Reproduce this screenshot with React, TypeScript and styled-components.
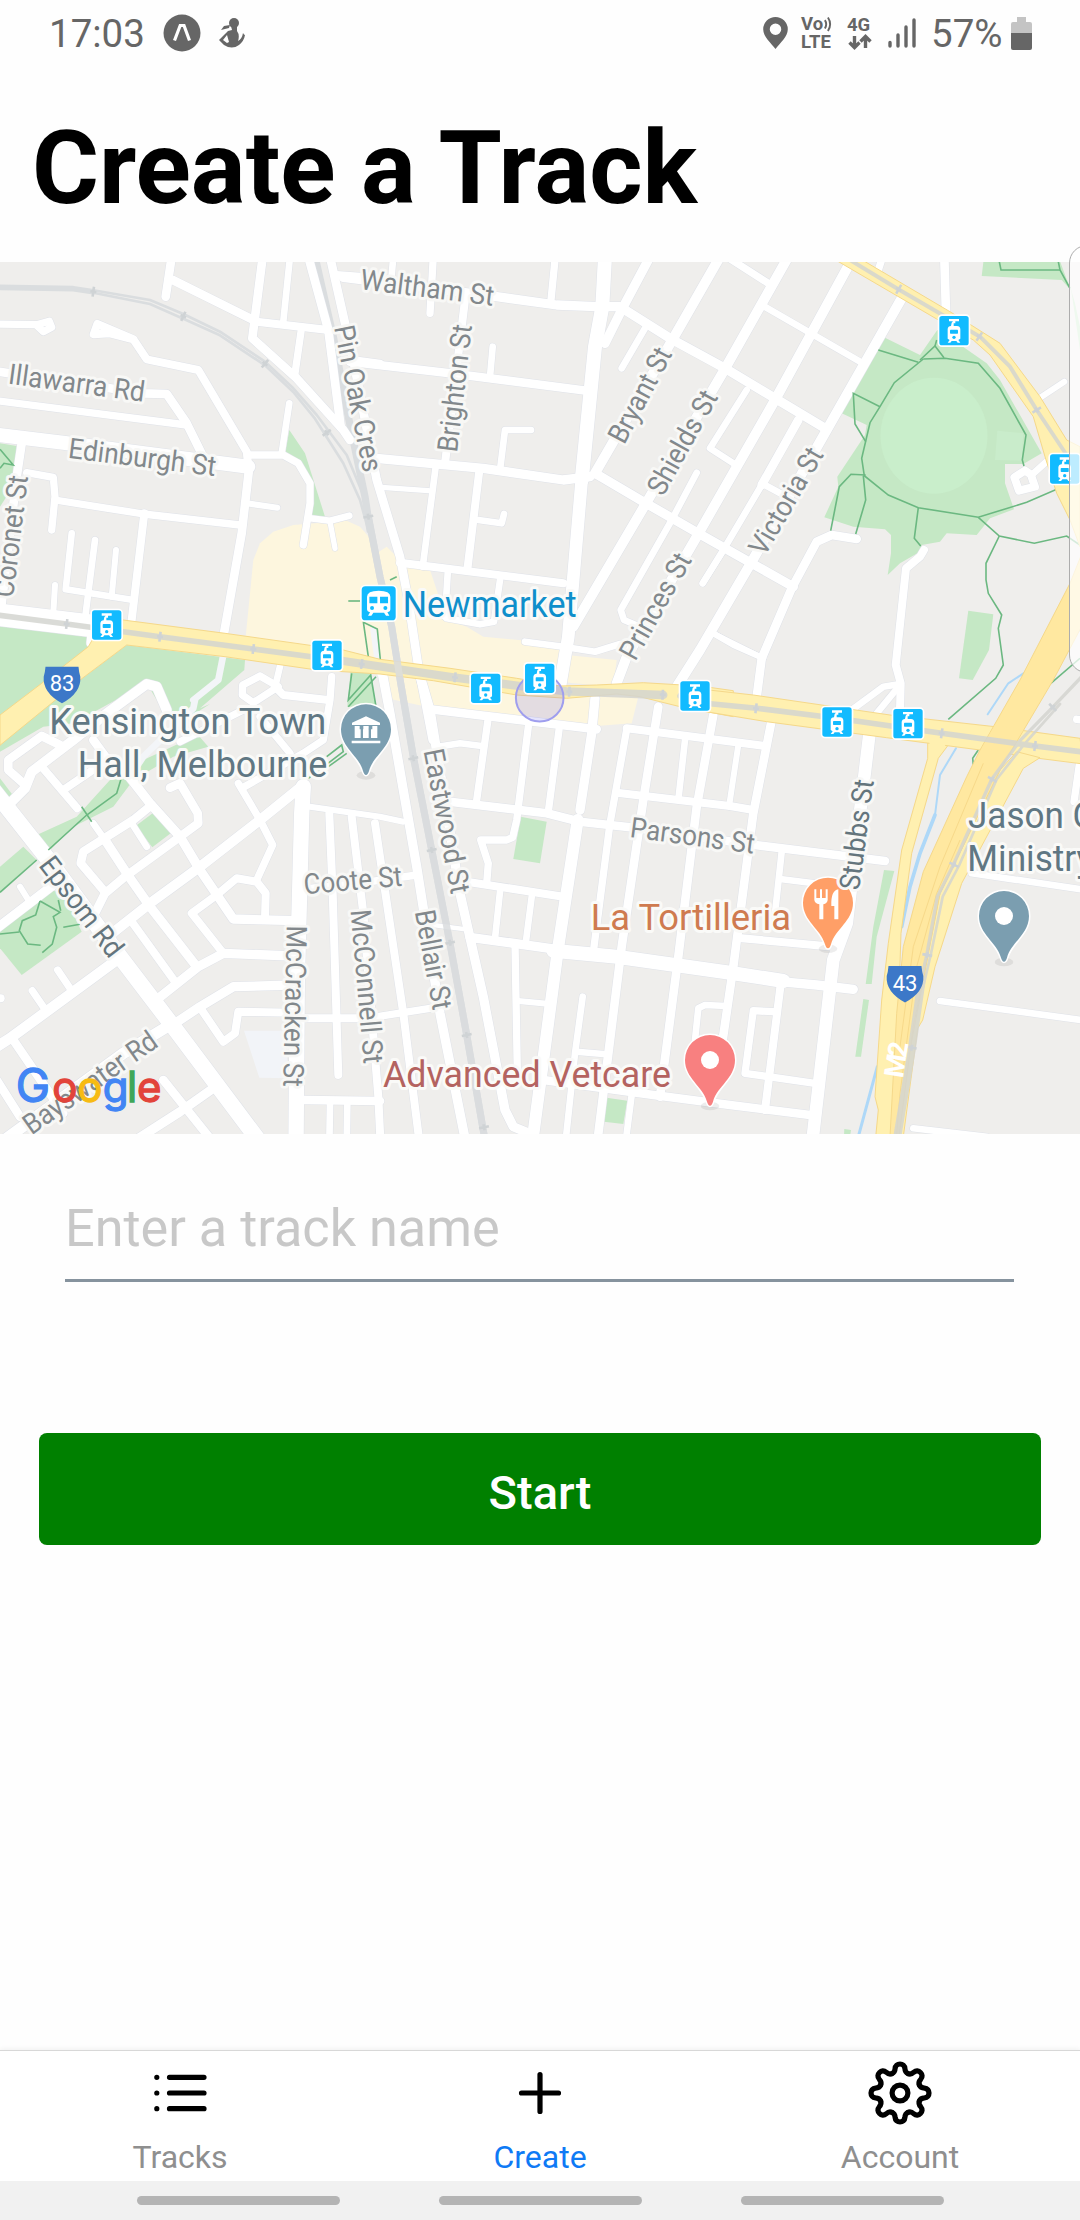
import React from "react";
import styled, { createGlobalStyle, css } from "styled-components";

const GlobalStyle = createGlobalStyle`
  * { box-sizing: border-box; }
  body { margin: 0; background: #fefefe; font-family: Roboto, "Liberation Sans", sans-serif; }
`;

const Screen = styled.div`
  position: relative;
  display: flex;
  flex-direction: column;
  width: 1080px;
  height: 2220px;
  background: #fefefe;
  overflow: hidden;
`;

/* ---------- status bar ---------- */

const StatusBar = styled.header`
  display: flex;
  justify-content: space-between;
  align-items: center;
  height: 66px;
  padding: 0 48px 0 49px;
  color: #666;
`;

const StatusGroup = styled.div`
  display: flex;
  align-items: center;
`;

const StatusText = styled.span<{ $width: number }>`
  width: ${(p) => p.$width}px;
  font-size: 38.5px;
  line-height: 66px;
  padding-top: 2px;
  white-space: nowrap;
`;

const NetworkStack = styled.div<{ $width: number; $gap: number }>`
  display: flex;
  flex-direction: column;
  width: ${(p) => p.$width}px;
  margin-right: ${(p) => p.$gap}px;
  font-size: 18.5px;
  font-weight: 700;
  line-height: 18px;
  white-space: nowrap;
`;

const VoiceLine = styled.span`
  display: flex;
  align-items: center;
  height: 18px;
  svg { display: block; margin-left: 1px; }
`;

const StatusIcon = styled.svg<{ $gap: number }>`
  display: block;
  margin-right: ${(p) => p.$gap}px;
  flex: none;
`;

/* ---------- content ---------- */

const TitleBar = styled.div`
  height: 196px;
  padding: 43px 0 0 32px;
`;

const Title = styled.h1`
  margin: 0;
  font-size: 102.4px;
  line-height: 118px;
  font-weight: 700;
  color: #000;
  white-space: nowrap;
`;

const MapFrame = styled.section`
  height: 872px;
  flex: none;
  background: #efeeec;
  svg { display: block; }
`;

const Form = styled.form`
  display: flex;
  flex-direction: column;
  flex: 1;
  padding: 58px 39px 0;
`;

const NameField = styled.input`
  height: 90px;
  margin: 0 27px 151px 26px;
  padding: 2px 0 16px;
  border: 0;
  border-bottom: 3px solid #86939e;
  border-radius: 0;
  background: transparent;
  outline: none;
  font: 400 52.2px Roboto, "Liberation Sans", sans-serif;
  color: #222;
  &::placeholder { color: #c8c8c8; opacity: 1; }
`;

const StartButton = styled.button`
  height: 112px;
  padding: 7px 0 0;
  border: 0;
  border-radius: 8px;
  background: #008000;
  color: #fff;
  font: 500 47px Roboto, "Liberation Sans", sans-serif;
`;

/* ---------- bottom ---------- */

const TabBar = styled.nav`
  display: grid;
  grid-template-columns: repeat(3, 1fr);
  height: 131px;
  flex: none;
  border-top: 1px solid #d8d8d8;
  background: #fff;
  box-shadow: 0 -1px 5px rgba(0, 0, 0, 0.06);
`;

const Tab = styled.a<{ $active?: boolean }>`
  display: flex;
  flex-direction: column;
  align-items: center;
  padding-top: 6px;
  font-size: 32px;
  line-height: 38px;
  color: #8f8f8f;
  ${(p) => p.$active && css`color: #0f7af5;`}
  svg { display: block; margin-bottom: 9px; }
`;

const NavStrip = styled.footer`
  display: flex;
  justify-content: center;
  gap: 99px;
  height: 39px;
  padding-top: 15px;
  flex: none;
  background: #f1f1f1;
`;

const NavPill = styled.span`
  width: 203px;
  height: 9px;
  border-radius: 5px;
  background: #b4b4b4;
`;

const EdgeHandle = styled.div`
  position: absolute;
  top: 245px;
  right: -30px;
  width: 41px;
  height: 428px;
  border: 1.5px solid #adadad;
  border-radius: 18px;
  background: rgba(255, 255, 255, 0.72);
`;

/* ---------- map data: six sheets, each surveyed at three units per pixel ---------- */

type Sheet = "A" | "B" | "C" | "D" | "E" | "F";
const ORIGIN: Record<Sheet, [number, number]> = {
  A: [0, 250],
  B: [350, 250],
  C: [700, 240],
  D: [0, 680],
  E: [350, 680],
  F: [700, 680],
};

const at = (s: Sheet, x: number, y: number): [number, number] => [
  +(ORIGIN[s][0] + x / 3).toFixed(1),
  +(ORIGIN[s][1] + y / 3).toFixed(1),
];

const pts = (s: Sheet, list: string) =>
  list
    .split(" ")
    .map((pair) => {
      const [x, y] = pair.split(",").map(Number);
      return at(s, x, y).join(",");
    })
    .join(" ");

type Line = [Sheet, number, string];

const ROADS: Line[] = [
  ["A", 26, "515,20 497,140"],
  ["A", 26, "518,90 770,215"],
  ["A", 26, "788,20 757,265 890,385 1030,540 1050,570"],
  ["A", 20, "870,20 850,215"],
  ["A", 24, "770,215 985,240"],
  ["A", 22, "903,245 885,370"],
  ["A", 26, "925,20 985,240 1022,530"],
  ["A", 26, "990,20 1060,330 1130,690 1200,920 1225,1050 1255,1250 1275,1350 1298,1470"],
  ["A", 24, "1010,75 1100,82"],
  ["A", 26, "1050,330 1140,342"],
  ["A", 22, "-10,222 110,224 148,214 155,232 130,245 110,226"],
  ["A", 24, "400,268 292,222 281,253 330,250 400,268 440,328 595,360 740,605 745,650"],
  ["A", 26, "-10,364 430,430 500,432 560,520 612,625"],
  ["A", 22, "-10,452 560,525"],
  ["A", 42, "-10,554 190,578 745,650"],
  ["A", 22, "750,615 850,615 895,640 930,700 930,760 910,885"],
  ["A", 20, "868,460 845,610"],
  ["A", 20, "930,805 990,812 1048,797"],
  ["A", 16, "990,815 1005,895"],
  ["A", 26, "748,650 725,850 672,1150"],
  ["A", 18, "740,760 832,773"],
  ["A", 26, "65,580 50,680 5,1060"],
  ["A", 22, "80,668 160,682 165,740 155,840"],
  ["A", 22, "165,750 430,792 720,825"],
  ["A", 24, "433,790 395,1110"],
  ["A", 20, "215,850 197,1018 400,1050"],
  ["A", 20, "285,870 257,1090"],
  ["A", 18, "348,900 335,1040"],
  ["A", 18, "165,1005 160,1090"],
  ["A", 68, "-40,1090 310,1132"],
  ["A", 26, "275,1150 272,1180"],
  ["B", 28, "-20,82 440,140 620,165 740,170 810,170 960,265 1120,352 1425,535"],
  ["B", 26, "0,335 300,370 710,422"],
  ["B", 20, "130,20 125,75"],
  ["B", 22, "250,20 240,190"],
  ["B", 24, "345,150 285,640"],
  ["B", 22, "616,20 603,150"],
  ["B", 42, "765,20 757,170 735,290 695,690"],
  ["B", 38, "695,690 655,1160 628,1320"],
  ["B", 28, "900,20 820,170 765,280"],
  ["B", 30, "1110,20 970,265 735,670"],
  ["B", 30, "1315,20 1120,365 885,765 670,1130"],
  ["B", 30, "1510,20 1275,450 1040,860 830,1220 800,1300"],
  ["B", 20, "885,235 815,355"],
  ["B", 20, "1040,668 965,810 812,1080 822,1110 870,1130"],
  ["B", 18, "1115,910 1058,1000"],
  ["B", 28, "735,670 880,755 1045,850 1330,1010"],
  ["B", 20, "428,290 420,380"],
  ["B", 20, "543,540 465,540 450,660"],
  ["B", 28, "80,625 400,655 640,690 720,680"],
  ["B", 16, "95,712 235,722"],
  ["B", 20, "257,650 218,950"],
  ["B", 24, "387,670 352,960"],
  ["B", 20, "385,810 455,820 462,792"],
  ["B", 24, "150,938 640,1000"],
  ["B", 20, "293,970 285,1100"],
  ["B", 20, "450,990 432,1115 390,1123 290,1105"],
  ["B", 20, "525,1175 640,1190 735,1205 810,1182"],
  ["B", 18, "1090,1150 1150,1185 1240,1225"],
  ["C", 22, "80,50 205,130"],
  ["C", 20, "185,195 480,365"],
  ["C", 30, "605,175 380,570 155,965 0,1230 -70,1340"],
  ["C", 26, "470,897 395,885 350,905 275,1045 185,1255 170,1370"],
  ["C", 20, "140,450 30,625 100,670"],
  ["C", 26, "295,540 185,735"],
  ["C", 20, "185,735 70,930 8,1030"],
  ["C", 20, "185,730 260,770"],
  ["C", 16, "40,1180 180,1250"],
  ["C", 22, "548,50 535,90"],
  ["C", 26, "733,50 738,220"],
  ["C", 18, "1010,480 1093,425"],
  ["C", 24, "975,692 943,712 957,752 1005,740 992,703 975,692"],
  ["C", 20, "995,705 1045,660"],
  ["C", 24, "672,930 660,950 618,985 587,1275 602,1330 600,1410"],
  ["C", 20, "600,1332 550,1340 455,1410"],
  ["C", 20, "600,1335 530,1420"],
  ["D", 48, "-20,330 150,545 360,830 520,1040 790,1400"],
  ["D", 32, "350,840 30,1075 -10,1100"],
  ["D", 22, "173,870 210,925"],
  ["D", 22, "97,932 135,988"],
  ["D", 24, "-10,955 2,955"],
  ["D", 26, "40,1080 190,1300"],
  ["D", 26, "-10,1200 60,1310"],
  ["D", 34, "510,1035 370,1120 20,1375"],
  ["D", 28, "510,1040 600,980 700,920 880,915"],
  ["D", 24, "605,990 670,1085 705,1060 715,995 880,998"],
  ["D", 28, "475,955 595,860 670,820 880,828"],
  ["D", 28, "-10,745 160,615"],
  ["D", 18, "60,620 90,668"],
  ["D", 30, "330,765 450,670 600,560 780,420 910,315"],
  ["D", 26, "285,700 315,640 375,590 540,470 595,430 593,400 540,310 510,323"],
  ["D", 26, "455,375 400,420 250,515 242,550 310,630"],
  ["D", 28, "380,280 450,370 540,470 600,570 700,717 890,722"],
  ["D", 20, "395,430 440,500"],
  ["D", 20, "280,430 315,480"],
  ["D", 28, "315,480 380,580 450,680 590,860"],
  ["D", 24, "395,725 525,905"],
  ["D", 24, "125,260 232,385"],
  ["D", 24, "190,330 330,235"],
  ["D", 24, "670,820 575,700 650,645 710,595 770,605 797,640 795,715"],
  ["D", 22, "770,600 818,495 780,420 715,310"],
  ["D", 46, "910,320 905,400 892,900 888,1400"],
  ["D", 18, "930,380 1140,410 1210,425"],
  ["D", 24, "988,400 998,640 1015,1185"],
  ["D", 24, "1055,410 1090,700 1135,1250 1142,1400"],
  ["D", 24, "915,1015 1140,1015"],
  ["D", 26, "910,1260 1140,1263"],
  ["D", 20, "990,1275 988,1400"],
  ["D", 20, "1042,1275 1040,1400"],
  ["D", 28, "640,1225 540,1295 400,1385"],
  ["D", 26, "490,1200 650,1400"],
  ["D", 30, "30,370 75,325 95,275 220,180 320,100 440,12 470,20 500,90"],
  ["D", 26, "180,195 125,168 25,240 25,270 70,310"],
  ["D", 26, "280,180 320,235"],
  ["D", 22, "780,-12 728,15 727,45 760,68 835,20 780,-12"],
  ["D", 24, "825,20 850,45 985,60"],
  ["D", 20, "842,-50 828,10"],
  ["D", 22, "995,-10 990,60 970,180 910,220 725,325"],
  ["D", 22, "540,185 730,90"],
  ["D", 22, "780,110 870,220"],
  ["D", 22, "930,625 1090,608 1250,585"],
  ["E", 28, "95,-30 120,100 160,330 200,560 270,1000 350,1400"],
  ["E", 28, "205,-30 240,90 330,640 400,950 465,1290 490,1340 550,1365"],
  ["E", 24, "75,430 160,1000 210,1400"],
  ["E", 22, "30,1018 240,985"],
  ["E", 26, "240,88 740,148"],
  ["E", 28, "735,55 725,160 690,390"],
  ["E", 36, "683,420 625,800 545,1400"],
  ["E", 20, "255,202 330,190 395,198"],
  ["E", 22, "413,125 378,375"],
  ["E", 22, "535,140 500,420 488,472 470,480 392,480 415,550 410,610"],
  ["E", 22, "627,150 595,395"],
  ["E", 26, "300,365 590,400 690,425 840,442 1215,495 1605,543"],
  ["E", 24, "350,605 640,650"],
  ["E", 20, "450,635 435,775"],
  ["E", 20, "545,650 527,790"],
  ["E", 28, "360,772 620,808"],
  ["E", 42, "610,812 800,830 1140,878 1300,903"],
  ["E", 28, "1290,905 1400,915 1510,928"],
  ["E", 22, "495,790 502,1170"],
  ["E", 18, "505,963 600,972"],
  ["E", 20, "698,950 675,1120 645,1400"],
  ["E", 20, "680,1115 760,1122"],
  ["E", 22, "830,148 780,430 732,800"],
  ["E", 26, "925,80 880,360 815,800 740,1400"],
  ["E", 26, "1090,105 1040,380 985,830 930,1250"],
  ["E", 20, "1005,180 985,360"],
  ["E", 24, "830,145 1240,197"],
  ["E", 24, "800,338 1140,378 1210,390"],
  ["E", 14, "250,735 340,747"],
  ["E", 26, "580,1200 910,1245 1140,1275 1380,1305"],
  ["E", 20, "845,1245 825,1400"],
  ["E", 20, "1130,978 1065,975 1045,985 1035,1080"],
  ["F", 26, "215,120 160,400 100,860 65,1100"],
  ["F", 38, "508,165 440,730 400,840 335,1400"],
  ["F", 18, "115,195 87,380"],
  ["F", 20, "245,515 225,700"],
  ["F", 20, "240,597 360,612"],
  ["F", 24, "125,775 400,800"],
  ["F", 24, "243,905 195,1290"],
  ["F", 22, "220,995 160,992 135,1180 345,1210"],
  ["F", 22, "1140,240 1122,365"],
  ["F", 20, "815,580 1160,630"],
  ["F", 20, "720,963 1160,1022"],
  ["F", 20, "640,1345 860,1370"],
  ["F", 22, "1130,118 1160,122"],
];

const PALE_ROADS: Line[] = [
  ["A", 20, "670,1215 655,1290 580,1350"],
  ["D", 20, "585,60 580,85 430,230 390,290"],
  ["E", 18, "70,-150 88,-20"],
];

type Area = [Sheet, string, string];

const GREEN = "#c5e8c5";
const BEIGE = "#fdf6de";
const AREAS: Area[] = [
  ["A", GREEN, "0,580 50,588 45,700 0,770"],
  ["A", GREEN, "868,540 915,610 975,800 935,800 940,710 890,640 855,610"],
  ["A", GREEN, "0,1120 260,1160 270,1190 120,1310 0,1400"],
  ["D", GREEN, "380,-105 735,-60 733,-30 600,85 630,72 540,130 500,110 440,10 220,130 130,140 0,215 0,180 240,0"],
  ["D", GREEN, "330,300 430,240 560,180 600,172 625,200 520,230 400,300 340,380 220,440 150,510 110,465 230,410"],
  ["D", GREEN, "0,560 70,500 110,540 0,640"],
  ["D", GREEN, "0,295 42,350 30,362 0,320"],
  ["D", GREEN, "0,750 150,630 190,640 245,755 65,885 0,805"],
  ["D", GREEN, "460,398 512,460 457,502 408,437"],
  ["D", "#f2f4f8", "732,1052 850,1052 870,1195 778,1193"],
  ["E", GREEN, "512,410 590,425 570,550 490,537"],
  ["E", GREEN, "770,1253 832,1262 820,1332 762,1325"],
  ["C", GREEN, "555,293 660,345 712,270 760,300 860,370 900,420 1025,640 970,672 915,672 915,730 942,808 870,835 830,885 740,880 720,905 665,915 660,935 600,970 563,1005 573,940 573,885 555,868 460,860 373,832 415,740 412,710 495,585 500,555 425,520 460,455"],
  ["C", "#c9eccb", "892,572 970,580 965,662 885,660"],
  ["C", GREEN, "852,50 1075,50 1112,150 1085,120 845,108"],
  ["C", GREEN, "1108,130 1125,190 1140,260 1140,330 1115,160"],
  ["C", GREEN, "805,1112 880,1123 867,1230 818,1320 777,1315"],
  ["F", GREEN, "552,570 583,573 530,770 515,912 497,912 520,740"],
  ["F", GREEN, "490,957 507,960 483,1130 466,1130"],
  ["F", GREEN, "433,1347 453,1350 450,1370 432,1370"],
  ["A", BEIGE, "880,825 820,845 780,880 760,930 737,1160 1140,1230 1140,920 1110,865 1080,830 1040,812"],
  ["B", BEIGE, "0,820 50,880 80,910 110,890 150,930 240,960 290,1110 350,1130 400,1160 610,1180 650,1215 800,1230 790,1310 0,1240"],
  ["E", BEIGE, "110,-20 400,0 870,30 845,130 740,138 450,112 230,80 110,55"],
  ["A", GREEN, "1052,1260 1112,1260 1128,1370 1042,1370"],
];

const PATHS: [Sheet, string][] = [
  ["A", "0,598 40,645 12,640 0,655"],
  ["A", "1045,1053 1080,1053"],
  ["B", "120,990 140,980"],
  ["B", "40,1115 55,1220 60,1225"],
  ["B", "40,1117 82,1137 92,1240"],
  ["A", "1055,1270 1045,1350 1112,1275 1128,1370"],
  ["D", "1045,80 1128,-10"],
  ["D", "980,230 1025,195 1030,215 925,295"],
  ["D", "985,260 1040,220"],
  ["D", "365,290 350,340 260,405 145,510"],
  ["D", "245,380 275,425"],
  ["D", "110,540 0,637"],
  ["D", "120,663 107,705 67,722 58,752 83,792 122,796"],
  ["D", "0,762 58,756"],
  ["D", "120,663 180,697 160,710 170,742 157,792 127,818"],
  ["D", "190,742 240,733"],
  ["D", "175,660 182,692"],
  ["C", "535,330 655,367"],
  ["C", "660,360 705,318 732,353"],
  ["C", "705,318 710,300"],
  ["C", "670,357 735,355 835,370 900,445 978,585 967,660 972,678"],
  ["C", "670,357 583,428 540,500 510,548 485,655 493,707 565,765 655,803 835,832 980,787 1070,748 1105,820 1140,822"],
  ["C", "540,500 460,460 465,552 497,605"],
  ["C", "497,705 453,703 418,740 392,872"],
  ["C", "490,707 497,780 467,882"],
  ["C", "655,803 643,895 662,918"],
  ["C", "835,832 898,888 1003,910 1100,888 1140,915"],
  ["C", "898,888 858,970 858,1020 865,1060 905,1125 895,1165 910,1275 887,1315 745,1438"],
  ["C", "895,50 903,90 1080,90"],
  ["C", "1072,50 1080,90 1110,145"],
  ["C", "1035,1345 1140,1255"],
  ["F", "835,210 818,235 820,255"],
];

const RIVERS: Line[] = [
  ["C", 6, "975,1297 925,1330 863,1423"],
  ["C", 6, "1140,1170 1110,1195"],
  ["F", 6, "768,205 720,285 705,405 660,520"],
  ["F", 11, "705,405 660,520 630,620 605,740"],
  ["F", 9, "532,1160 475,1370"],
];

const HIGHWAYS: Area[] = [
  ["A", "#fff0b0", "370,1110 675,1150 1030,1200 1140,1228 1350,1255 1550,1285 1680,1308 1790,1305 1930,1298 2100,1308 2200,1322 2200,1400 2040,1370 1920,1340 1850,1332 1700,1345 1550,1335 1300,1292 1140,1272 950,1260 675,1220 380,1185 240,1290 0,1486 0,1395 125,1300 265,1190 300,1130"],
  ["C", "#fff0b0", "390,50 710,237 820,300 870,345 1000,530 1035,650 1070,760 1110,840 1140,920 1140,620 1100,600 1020,470 900,310 750,215 470,50"],
  ["F", "#fff0b0", "683,180 683,235 605,510 565,790 545,960 525,1250 535,1290 527,1370 590,1370 595,1000 600,850 603,760 635,520 715,235 745,195"],
  ["F", "#fff0b0", "0,27 160,45 570,105 885,140 1140,175 1150,252 1015,235 840,210 560,173 200,125 0,92"],
  ["F", "#fff0b0", "950,215 900,270 720,640 580,1370 610,1370 653,1045 668,1020 705,860 785,610 970,265 1020,233"],
  ["F", "#ffe8a0", "1150,-390 1110,-290 960,0 840,210 800,290 670,575 610,800 590,1000 570,1370 597,1370 640,1040 720,640 740,600 900,270 1060,0 1150,-170"],
];

const RAILS: Line[] = [
  ["A", 17, "-10,112 220,116 280,125"],
  ["A", 8, "280,121 450,150 550,192 660,245 795,335 880,415 950,495 1040,615 1090,735 1110,840"],
  ["A", 8, "280,128 450,162 550,206 660,256 795,346 880,426 945,506 1030,640 1080,750 1105,840"],
  ["A", 22, "945,20 1000,260 1045,500 1095,740 1110,840"],
  ["A", 21, "1105,800 1140,980 1175,1130 1202,1300 1240,1520 1295,1800 1350,2080 1400,2355 1460,2700"],
  ["A", 17, "-10,1095 200,1122 480,1160 760,1197 1030,1233"],
  ["A", 25, "1030,1233 1360,1282 1550,1307 1700,1324 1990,1335"],
  ["F", 17, "-60,48 0,68 170,85 410,115 725,160 1005,198 1150,216"],
  ["C", 12, "450,60 595,148 840,290 930,380 1010,510 1110,660"],
  ["F", 10, "1150,-15 1060,80 960,182 875,298 760,555 712,650 680,825 650,960"],
  ["F", 8, "1080,72 975,190 890,298 778,555 728,650 692,825 660,960"],
  ["F", 24, "665,900 635,1110 592,1370"],
];

const TICKS: [Sheet, number, number, number][] = [
  ["A", 280, 125, 8], ["A", 550, 199, 25], ["A", 795, 341, 40], ["A", 980, 548, 55], ["A", 1105, 800, 80],
  ["A", 200, 1122, 7], ["A", 480, 1160, 7], ["A", 760, 1197, 7], ["A", 1085, 1242, 7],
  ["B", 315, 1282, 7], ["B", 658, 1325, 3], ["B", 938, 1334, 3],
  ["E", 190, 235, 79], ["E", 245, 510, 79], ["E", 300, 788, 79], ["E", 350, 1065, 79], ["E", 402, 1342, 79],
  ["F", 168, 85, 7], ["F", 725, 160, 8], ["F", 1005, 198, 8], ["F", 1058, 82, -45], ["F", 877, 298, -60],
  ["F", 762, 554, -65], ["F", 682, 825, -80], ["F", 635, 1103, -80],
  ["C", 596, 148, 30], ["C", 838, 290, 35], ["C", 1010, 510, 58],
];

type StreetLabel = [Sheet, string, number, number, number, number, string?];
const STREET = "#82888c";
const MAJOR = "#64757d";
const STREETS: StreetLabel[] = [
  ["B", "Waltham St", 33, 118, 425, 167],
  ["A", "Illawarra Rd", 27, 401, 427, 455],
  ["A", "Edinburgh St", 207, 624, 641, 678],
  ["A", "Coronet St", 40, 1040, 84, 682],
  ["A", "Pin Oak Cres", 1003, 236, 1090, 667],
  ["B", "Brighton St", 322, 604, 366, 230],
  ["B", "Bryant St", 825, 582, 967, 314],
  ["B", "Shields St", 941, 738, 1104, 444],
  ["B", "Princes St", 858, 1232, 1026, 932],
  ["C", "Victoria St", 196, 948, 371, 646],
  ["E", "Eastwood St", 221, 217, 303, 642],
  ["E", "Bellair St", 195, 700, 248, 990],
  ["E", "McConnell St", 2, 695, 41, 1150],
  ["D", "McCracken St", 860, 740, 850, 1217],
  ["D", "Coote St", 918, 642, 1205, 618],
  ["E", "Parsons St", 842, 472, 1207, 521],
  ["D", "Epsom Rd", 117, 560, 327, 836, MAJOR],
  ["D", "Bayswater Rd", 98, 1364, 476, 1098],
  ["F", "Stubbs St", 478, 628, 521, 306, MAJOR],
];

type PlaceLabel = [Sheet, string, number, number, number, string];
const PLACES: PlaceLabel[] = [
  ["B", "Newmarket", 158, 1102, 522, "#0f8fcb"],
  ["D", "Kensington Town", 148, 162, 831, "#607783"],
  ["D", "Hall, Melbourne", 233, 291, 749, "#607783"],
  ["F", "Jason C", 804, 443, 382, "#607783"],
  ["F", "Ministry", 802, 572, 378, "#607783"],
  ["E", "La Tortilleria", 722, 749, 601, "#cf7b50"],
  ["E", "Advanced Vetcare", 99, 1220, 864, "#b46360"],
];

const TRAMS: [Sheet, number, number][] = [
  ["A", 320, 1125], ["A", 981, 1216], ["B", 407, 1315], ["B", 569, 1285], ["B", 1035, 1338],
  ["F", 411, 126], ["F", 624, 131], ["C", 762, 272], ["C", 1094, 687],
];

/* letter, left edge, size, colour */
const GOOGLE: [string, number, number, string][] = [
  ["G", 47, 46, "#4285f4"],
  ["o", 157, 42, "#e2443a"],
  ["o", 232, 42, "#f7bb13"],
  ["g", 308, 42, "#4285f4"],
  ["l", 381, 42, "#3fa658"],
  ["e", 411, 42, "#e2443a"],
];

function StreetName({ label }: { label: StreetLabel }) {
  const [sheet, text, x1, y1, x2, y2, color = STREET] = label;
  const [x, y] = at(sheet, x1, y1);
  const angle = (Math.atan2(y2 - y1, x2 - x1) * 180) / Math.PI;
  return (
    <text
      transform={`translate(${x} ${y}) rotate(${angle.toFixed(1)})`}
      x="-1.5"
      textLength={(Math.hypot(x2 - x1, y2 - y1) / 3 + 2.5).toFixed(1)}
      lengthAdjust="spacingAndGlyphs"
      fontSize="28.5"
      fill={color}
      stroke="#f8f8f6"
      strokeWidth="6"
      strokeLinejoin="round"
      paintOrder="stroke"
    >
      {text}
    </text>
  );
}

function Tram({ x, y }: { x: number; y: number }) {
  return (
    <g transform={`translate(${x} ${y}) scale(.3333)`}>
      <rect x="-49" y="-49" width="98" height="98" rx="13" fill="#fff" />
      <rect x="-44" y="-44" width="88" height="88" rx="8" fill="#12bbff" />
      <path d="M-15 -35H15V-28H4V-22H-1V-14H9Q18 -14 19 -5V24L13 28L19 36H11L7 31H-7L-11 36H-19L-13 28L-19 24V-5Q-18 -14 -9 -14L-7 -24L-3 -28H-15Z" fill="#fff" />
      <rect x="-12" y="-3" width="24" height="12" rx="2" fill="#12bbff" />
      <circle cx="0" cy="20" r="5" fill="#12bbff" />
    </g>
  );
}

function Train({ x, y }: { x: number; y: number }) {
  return (
    <g transform={`translate(${x} ${y}) scale(.3333)`}>
      <rect x="-56" y="-56" width="112" height="112" rx="16" fill="#fff" />
      <rect x="-51" y="-51" width="102" height="102" rx="11" fill="#12bbff" />
      <path d="M-35 -20Q-35 -38 0 -38T35 -20V18Q35 25 26 27L32 37H22L16 28H-16L-22 37H-32L-26 27Q-35 25 -35 18Z" fill="#fff" />
      <path d="M-28 -20H-4V0H-28ZM4 -20H28V0H4Z" fill="#12bbff" />
      <circle cx="-20" cy="14" r="6" fill="#12bbff" />
      <circle cx="20" cy="14" r="6" fill="#12bbff" />
    </g>
  );
}

function Pin({ pos, color, children }: { pos: [number, number]; color: string; children: React.ReactNode }) {
  return (
    <g transform={`translate(${pos[0]} ${pos[1]}) scale(.3333)`}>
      <ellipse cx="0" cy="138" rx="28" ry="13" fill="#000" opacity=".07" />
      <path
        d="M0 137C-4 137 -7 132 -9 125C-22 78 -75 55 -75 0A75 75 0 0 1 75 0C75 55 22 78 9 125C7 132 4 137 0 137Z"
        fill={color}
        stroke="#fff"
        strokeWidth="9"
        paintOrder="stroke"
      />
      {children}
    </g>
  );
}

function RouteShield({ pos, num }: { pos: [number, number]; num: string }) {
  return (
    <g transform={`translate(${pos[0]} ${pos[1]})`}>
      <path d="M-16.5 -18H16.5Q17 -12 18.3 -8Q19.500 8 0 18.500Q-19.500 8 -18.300 -8Q-17 -12 -16.500 -18Z" fill="#3c78c8" />
      <text textAnchor="middle" y="6.5" fontSize="22" fill="#fff">{num}</text>
    </g>
  );
}

const Lines = ({ data, color, grow = 0 }: { data: Line[]; color: string; grow?: number }) => (
  <g fill="none" stroke={color} strokeLinecap="round" strokeLinejoin="round">
    {data.map(([s, w, list], i) => (
      <polyline key={i} points={pts(s, list)} strokeWidth={(w + grow) / 3} />
    ))}
  </g>
);

function StreetMap() {
  const [ovalX, ovalY] = at("C", 702, 587);
  const [hereX, hereY] = at("E", 569, 53);
  const [m2x, m2y] = at("F", 608, 1196);
  const station = at("B", 86, 1060);
  return (
    <svg width="1080" height="872" viewBox="0 262 1080 872" fontFamily='Roboto, "Liberation Sans", sans-serif'>
      <rect x="0" y="262" width="1080" height="872" fill="#efeeec" />
      {AREAS.map(([s, fill, list], i) => (
        <polygon key={i} points={pts(s, list)} fill={fill} />
      ))}
      <ellipse cx={ovalX} cy={ovalY} rx="53.5" ry="58" fill="#c9eecb" />
      <Lines data={RIVERS} color="#aed8f8" />
      <Lines data={RAILS.slice(0, 5)} color="#dadddf" />
      <Lines data={ROADS} color="#dfe2e8" grow={3} />
      <Lines data={PALE_ROADS} color="#f3f5f8" />
      <Lines data={ROADS} color="#ffffff" />
      <g fill="none" stroke="#6bb881" strokeWidth="1.6">
        {PATHS.map(([s, list], i) => (
          <polyline key={i} points={pts(s, list)} />
        ))}
      </g>
      <g stroke="#f5d88a" strokeWidth="1">
        {HIGHWAYS.map(([s, fill, list], i) => (
          <polygon key={i} points={pts(s, list)} fill={fill} />
        ))}
      </g>
      {/* joins where the western and eastern sheets and the ramps meet */}
      <polygon points={pts("F", "-90,24 20,36 20,88 -60,70")} fill="#fff0b0" />
      <polygon points={pts("F", "690,150 760,160 730,205 688,205")} fill="#fff0b0" />
      <polygon points={pts("F", "885,135 970,150 925,215 845,205")} fill="#ffe8a0" />
      <g fill="none" stroke="#f7d98a" strokeWidth="1">
        <polyline points={pts("F", "850,250 720,560 640,800 600,1100")} />
        <polyline points={pts("F", "780,480 710,640 650,860 600,1240 590,1362")} />
      </g>
      <g opacity=".85">
        <Lines data={RAILS.slice(5)} color="#d4d5d0" />
        <Lines data={[RAILS[4]]} color="#d9dcde" />
      </g>
      <g stroke="#cfd3d5" strokeWidth="2.600">
        {TICKS.map(([s, x, y, a], i) => {
          const [tx, ty] = at(s, x, y);
          return <path key={i} d="M0 -5V5M-3 0H3" transform={`translate(${tx} ${ty}) rotate(${a})`} />;
        })}
      </g>

      {STREETS.slice(0, -1).map((label) => (
        <StreetName key={label[1]} label={label} />
      ))}
      <text transform={`translate(${m2x} ${m2y}) rotate(-81)`} fontSize="27" fontWeight="700" fill="#fff" textLength="36">
        M2
      </text>
      <circle cx={hereX} cy={hereY} r="23.8" fill="rgba(125,120,240,.2)" stroke="#9f9eee" strokeWidth="2" />

      {TRAMS.map(([s, x, y], i) => {
        const p = at(s, x, y);
        return <Tram key={i} x={p[0]} y={p[1]} />;
      })}
      <Train x={station[0]} y={station[1]} />
      <RouteShield pos={at("A", 186, 1304)} num="83" />
      <RouteShield pos={at("F", 615, 912)} num="43" />

      <Pin pos={at("E", 48, 148)} color="#7b9eb0">
        <path d="M-42 -20L0 -39L42 -20V-13H-42ZM-34 -10H34V26H15V-2H8V26H-9V-2H-16V26H-34ZM-43 34H43V42H-43Z" fill="#fff" />
        <path d="M-19 -12H-8V0H-19ZM8 -12H19V0H8Z" fill="#7b9eb0" />
      </Pin>
      <Pin pos={at("F", 384, 668)} color="#ff9f67">
        <path d="M-41 -40H-35V-14H-24V-40H-18V-14H-7V-40H-1V-8Q-2 2 -14 5V50H-26V5Q-40 2 -41 -8ZM31 -40V50H19V10H10Q8 -36 31 -40Z" fill="#fff" />
      </Pin>
      <Pin pos={at("E", 1080, 1140)} color="#f88080"><circle r="27" fill="#fff" /></Pin>
      <Pin pos={at("F", 912, 708)} color="#7b9eb0"><circle r="27" fill="#fff" /></Pin>
      <StreetName label={STREETS[STREETS.length - 1]} />

      {PLACES.map(([s, text, x, y, len, color]) => {
        const p = at(s, x, y);
        return (
          <text key={text} x={p[0]} y={p[1]} fontSize="37" fill={color} stroke="#fafaf8" strokeWidth="6"
            strokeLinejoin="round" paintOrder="stroke" textLength={len / 3} lengthAdjust="spacingAndGlyphs">
            {text}
          </text>
        );
      })}

      <g fontFamily='Inter, "Open Sans", sans-serif' strokeWidth="1.3">
        {GOOGLE.map(([ch, x, size, color], i) => {
          const p = at("D", x, 1266);
          return <text key={i} x={p[0]} y={p[1]} fontSize={size} fill={color} stroke={color}>{ch}</text>;
        })}
      </g>
    </svg>
  );
}

/* ---------- tab icons ---------- */

const TabIcon = ({ children }: { children: React.ReactNode }) => (
  <svg width="72" height="72" viewBox="-36 -36 72 72" fill="none" stroke="#000" strokeWidth="5.2" strokeLinecap="round" strokeLinejoin="round">
    {children}
  </svg>
);

const ListIcon = () => (
  <TabIcon>
    <path d="M-10.500 -15.700H24M-10.500 0H24M-10.500 15.700H24M-23.200 -15.700h.01M-23.200 0h.01M-23.200 15.700h.01" />
  </TabIcon>
);

const PlusIcon = () => (
  <TabIcon>
    <path d="M-18.500 0H18.500M0 -18.500V18.500" />
  </TabIcon>
);

const GearIcon = () => (
  <TabIcon>
    <circle r="7.900" />
    {[0, 45, 90, 135, 180, 225, 270, 315].map((a) => (
      <path key={a} transform={`rotate(${a})`} d="M-8 -19.400C-5.500 -20.400 -5 -22 -4.900 -24.500C-4.700 -27.500 -2.600 -29 0 -29S4.700 -27.500 4.900 -24.500C5 -22 5.500 -20.400 8 -19.400" />
    ))}
  </TabIcon>
);

export default function App() {
  return (
    <Screen>
      <GlobalStyle />
      <StatusBar>
        <StatusGroup>
          <StatusText $width={114}>17:03</StatusText>
          <StatusIcon $gap={18} width="38" height="38" viewBox="0 0 38 38">
            <circle cx="19" cy="19" r="18.500" fill="#666" />
            <path d="M11.500 26.500L17.200 11.500H21L26.500 26.500" fill="none" stroke="#fff" strokeWidth="3.200" />
          </StatusIcon>
          <StatusIcon $gap={0} width="28" height="32" viewBox="0 0 28 32" fill="#666">
            <circle cx="15" cy="6" r="5" />
            <path d="M12 9H18V14Q21 18 19 24Q23 22 24 16Q25 18 26 18Q25 24 20 28Q13 33 5 28L0 23L9 14L13 13ZM8 18L4 23L8 26L10 25Z" fillRule="evenodd" />
            <path d="M11 8L5 9L2 13L6 12L10 11Z" />
          </StatusIcon>
        </StatusGroup>
        <StatusGroup>
          <StatusIcon $gap={13} width="25" height="32" viewBox="0 0 25 32">
            <path d="M12.500 0A12.300 12.300 0 0 0 0.200 12.300C.2 20 8 26 12.500 32C17 26 24.800 20 24.800 12.300A12.300 12.300 0 0 0 12.500 0ZM12.500 6.500A5.700 5.700 0 1 1 12.500 18A5.700 5.700 0 1 1 12.500 6.500Z" fill="#666" fillRule="evenodd" />
          </StatusIcon>
          <NetworkStack $width={31} $gap={15}>
            <VoiceLine>
              Vo
              <svg width="9" height="17" viewBox="0 0 9 17" fill="none" stroke="#666" strokeWidth="2.2">
                <path d="M1 3.500Q4 8 1 13M4.500 .5Q9.500 8 4.500 16" />
              </svg>
            </VoiceLine>
            <span>LTE</span>
          </NetworkStack>
          <NetworkStack $width={25} $gap={16}>
            <span>4G</span>
            <svg width="25" height="16" viewBox="0 0 25 16" fill="none" stroke="#666" strokeWidth="3.400">
              <path d="M7.500 2V13M2.500 8.500L7.500 13.500L12.500 8.500M18.500 14V3M13.500 7.500L18.500 2.500L23.500 7.500" />
            </svg>
          </NetworkStack>
          <StatusIcon $gap={15} width="28" height="32" viewBox="0 0 28 32" fill="none" stroke="#666" strokeWidth="3.400" strokeLinecap="round">
            <path d="M2 25.500V29M10 18V29M18 10V29M26 3V29" />
          </StatusIcon>
          <StatusText $width={80}>57%</StatusText>
          <StatusIcon $gap={0} width="21" height="33" viewBox="0 0 21 33">
            <path d="M6 0H15V5H19Q21 5 21 7V16H0V7Q0 5 2 5H6Z" fill="#c4c4c4" />
            <path d="M0 16H21V31Q21 33 19 33H2Q0 33 0 31Z" fill="#666" />
          </StatusIcon>
        </StatusGroup>
      </StatusBar>

      <TitleBar>
        <Title>Create a Track</Title>
      </TitleBar>

      <MapFrame>
        <StreetMap />
      </MapFrame>

      <Form>
        <NameField placeholder="Enter a track name" />
        <StartButton type="button">Start</StartButton>
      </Form>

      <TabBar>
        <Tab><ListIcon />Tracks</Tab>
        <Tab $active><PlusIcon />Create</Tab>
        <Tab><GearIcon />Account</Tab>
      </TabBar>
      <NavStrip>
        <NavPill />
        <NavPill />
        <NavPill />
      </NavStrip>
      <EdgeHandle />
    </Screen>
  );
}
